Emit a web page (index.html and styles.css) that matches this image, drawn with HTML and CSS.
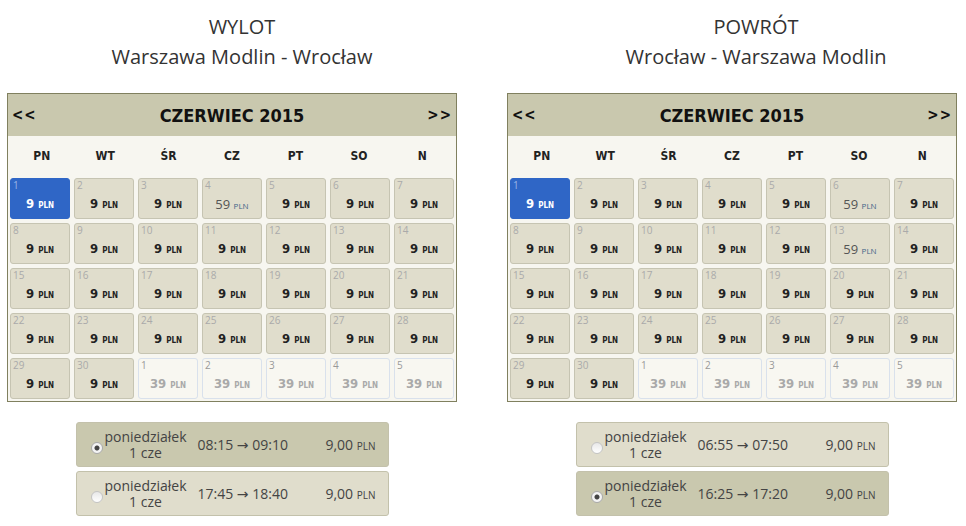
FILE: index.html
```html
<!DOCTYPE html>
<html lang="pl">
  <head>
    <meta charset="UTF-8" />
    <title>Rezerwacja lotu</title>
    <link rel="stylesheet" href="styles.css">
  </head>
  <body>
    <div class="trips">
      <!-- wylot -->
      <div class="trip">
        <div class="title title-out">WYLOT<br />Warszawa Modlin - Wrocław</div>
        <div class="cal">
          <div class="cal-head">
            <a class="nav">&lt;&lt;</a>
            <span class="month">CZERWIEC 2015</span>
            <a class="nav">&gt;&gt;</a>
          </div>
          <div class="week">
            <span>PN</span><span>WT</span><span>ŚR</span><span>CZ</span><span>PT</span><span>SO</span><span>N</span>
          </div>
          <div class="days">
            <div class="day sel"><span class="num">1</span><b class="price">9 <small>PLN</small></b></div>
            <div class="day"><span class="num">2</span><b class="price">9 <small>PLN</small></b></div>
            <div class="day"><span class="num">3</span><b class="price">9 <small>PLN</small></b></div>
            <div class="day"><span class="num">4</span><span class="price dear">59 <small>PLN</small></span></div>
            <div class="day"><span class="num">5</span><b class="price">9 <small>PLN</small></b></div>
            <div class="day"><span class="num">6</span><b class="price">9 <small>PLN</small></b></div>
            <div class="day"><span class="num">7</span><b class="price">9 <small>PLN</small></b></div>
            <div class="day"><span class="num">8</span><b class="price">9 <small>PLN</small></b></div>
            <div class="day"><span class="num">9</span><b class="price">9 <small>PLN</small></b></div>
            <div class="day"><span class="num">10</span><b class="price">9 <small>PLN</small></b></div>
            <div class="day"><span class="num">11</span><b class="price">9 <small>PLN</small></b></div>
            <div class="day"><span class="num">12</span><b class="price">9 <small>PLN</small></b></div>
            <div class="day"><span class="num">13</span><b class="price">9 <small>PLN</small></b></div>
            <div class="day"><span class="num">14</span><b class="price">9 <small>PLN</small></b></div>
            <div class="day"><span class="num">15</span><b class="price">9 <small>PLN</small></b></div>
            <div class="day"><span class="num">16</span><b class="price">9 <small>PLN</small></b></div>
            <div class="day"><span class="num">17</span><b class="price">9 <small>PLN</small></b></div>
            <div class="day"><span class="num">18</span><b class="price">9 <small>PLN</small></b></div>
            <div class="day"><span class="num">19</span><b class="price">9 <small>PLN</small></b></div>
            <div class="day"><span class="num">20</span><b class="price">9 <small>PLN</small></b></div>
            <div class="day"><span class="num">21</span><b class="price">9 <small>PLN</small></b></div>
            <div class="day"><span class="num">22</span><b class="price">9 <small>PLN</small></b></div>
            <div class="day"><span class="num">23</span><b class="price">9 <small>PLN</small></b></div>
            <div class="day"><span class="num">24</span><b class="price">9 <small>PLN</small></b></div>
            <div class="day"><span class="num">25</span><b class="price">9 <small>PLN</small></b></div>
            <div class="day"><span class="num">26</span><b class="price">9 <small>PLN</small></b></div>
            <div class="day"><span class="num">27</span><b class="price">9 <small>PLN</small></b></div>
            <div class="day"><span class="num">28</span><b class="price">9 <small>PLN</small></b></div>
            <div class="day"><span class="num">29</span><b class="price">9 <small>PLN</small></b></div>
            <div class="day"><span class="num">30</span><b class="price">9 <small>PLN</small></b></div>
            <div class="day other"><span class="num">1</span><b class="price">39 <small>PLN</small></b></div>
            <div class="day other"><span class="num">2</span><b class="price">39 <small>PLN</small></b></div>
            <div class="day other"><span class="num">3</span><b class="price">39 <small>PLN</small></b></div>
            <div class="day other"><span class="num">4</span><b class="price">39 <small>PLN</small></b></div>
            <div class="day other"><span class="num">5</span><b class="price">39 <small>PLN</small></b></div>
          </div>
        </div>
        <div class="flights">
          <label class="flight checked">
            <span class="radio"></span>
            <span class="when">poniedziałek<br />1 cze</span>
            <span class="hours">08:15 → 09:10</span>
            <span class="cost">9,00 <small>PLN</small></span>
          </label>
          <label class="flight">
            <span class="radio"></span>
            <span class="when">poniedziałek<br />1 cze</span>
            <span class="hours">17:45 → 18:40</span>
            <span class="cost">9,00 <small>PLN</small></span>
          </label>
        </div>
      </div>

      <!-- powrot -->
      <div class="trip">
        <div class="title title-back">POWRÓT<br />Wrocław - Warszawa Modlin</div>
        <div class="cal">
          <div class="cal-head">
            <a class="nav">&lt;&lt;</a>
            <span class="month">CZERWIEC 2015</span>
            <a class="nav">&gt;&gt;</a>
          </div>
          <div class="week">
            <span>PN</span><span>WT</span><span>ŚR</span><span>CZ</span><span>PT</span><span>SO</span><span>N</span>
          </div>
          <div class="days">
            <div class="day sel"><span class="num">1</span><b class="price">9 <small>PLN</small></b></div>
            <div class="day"><span class="num">2</span><b class="price">9 <small>PLN</small></b></div>
            <div class="day"><span class="num">3</span><b class="price">9 <small>PLN</small></b></div>
            <div class="day"><span class="num">4</span><b class="price">9 <small>PLN</small></b></div>
            <div class="day"><span class="num">5</span><b class="price">9 <small>PLN</small></b></div>
            <div class="day"><span class="num">6</span><span class="price dear">59 <small>PLN</small></span></div>
            <div class="day"><span class="num">7</span><b class="price">9 <small>PLN</small></b></div>
            <div class="day"><span class="num">8</span><b class="price">9 <small>PLN</small></b></div>
            <div class="day"><span class="num">9</span><b class="price">9 <small>PLN</small></b></div>
            <div class="day"><span class="num">10</span><b class="price">9 <small>PLN</small></b></div>
            <div class="day"><span class="num">11</span><b class="price">9 <small>PLN</small></b></div>
            <div class="day"><span class="num">12</span><b class="price">9 <small>PLN</small></b></div>
            <div class="day"><span class="num">13</span><span class="price dear">59 <small>PLN</small></span></div>
            <div class="day"><span class="num">14</span><b class="price">9 <small>PLN</small></b></div>
            <div class="day"><span class="num">15</span><b class="price">9 <small>PLN</small></b></div>
            <div class="day"><span class="num">16</span><b class="price">9 <small>PLN</small></b></div>
            <div class="day"><span class="num">17</span><b class="price">9 <small>PLN</small></b></div>
            <div class="day"><span class="num">18</span><b class="price">9 <small>PLN</small></b></div>
            <div class="day"><span class="num">19</span><b class="price">9 <small>PLN</small></b></div>
            <div class="day"><span class="num">20</span><b class="price">9 <small>PLN</small></b></div>
            <div class="day"><span class="num">21</span><b class="price">9 <small>PLN</small></b></div>
            <div class="day"><span class="num">22</span><b class="price">9 <small>PLN</small></b></div>
            <div class="day"><span class="num">23</span><b class="price">9 <small>PLN</small></b></div>
            <div class="day"><span class="num">24</span><b class="price">9 <small>PLN</small></b></div>
            <div class="day"><span class="num">25</span><b class="price">9 <small>PLN</small></b></div>
            <div class="day"><span class="num">26</span><b class="price">9 <small>PLN</small></b></div>
            <div class="day"><span class="num">27</span><b class="price">9 <small>PLN</small></b></div>
            <div class="day"><span class="num">28</span><b class="price">9 <small>PLN</small></b></div>
            <div class="day"><span class="num">29</span><b class="price">9 <small>PLN</small></b></div>
            <div class="day"><span class="num">30</span><b class="price">9 <small>PLN</small></b></div>
            <div class="day other"><span class="num">1</span><b class="price">39 <small>PLN</small></b></div>
            <div class="day other"><span class="num">2</span><b class="price">39 <small>PLN</small></b></div>
            <div class="day other"><span class="num">3</span><b class="price">39 <small>PLN</small></b></div>
            <div class="day other"><span class="num">4</span><b class="price">39 <small>PLN</small></b></div>
            <div class="day other"><span class="num">5</span><b class="price">39 <small>PLN</small></b></div>
          </div>
        </div>
        <div class="flights">
          <label class="flight">
            <span class="radio"></span>
            <span class="when">poniedziałek<br />1 cze</span>
            <span class="hours">06:55 → 07:50</span>
            <span class="cost">9,00 <small>PLN</small></span>
          </label>
          <label class="flight checked">
            <span class="radio"></span>
            <span class="when">poniedziałek<br />1 cze</span>
            <span class="hours">16:25 → 17:20</span>
            <span class="cost">9,00 <small>PLN</small></span>
          </label>
        </div>
      </div>
    </div>
  </body>
</html>
```
FILE: styles.css
```css
body {
  margin: 0;
  background: #fff;
  font-family: "Open Sans", "DejaVu Sans", sans-serif;
  color: #333;
}

.trips {
  display: flex;
  gap: 50px;
  padding: 12px 0 0 7px;
}

.trip {
  width: 450px;
}

.title {
  font-size: 20px;
  line-height: 30px;
  text-align: center;
  color: #333;
  margin-bottom: 21px;
}
.title-out {
  padding-left: 20px;
}
.title-back {
  padding-left: 48px;
}

/* kalendarz */
.cal {
  border: 1px solid #80805f;
  background: #f7f6f0;
  font-family: "DejaVu Sans Condensed", "DejaVu Sans", Tahoma, sans-serif;
}

.cal-head {
  display: flex;
  align-items: center;
  justify-content: space-between;
  height: 42px;
  padding: 0 4px;
  background: #c9c8ae;
  color: #111;
}
.nav {
  font-size: 15px;
  font-weight: bold;
  letter-spacing: 1px;
  cursor: pointer;
}
.month {
  font-size: 18px;
  font-weight: bold;
}

.week {
  display: grid;
  grid-template-columns: repeat(7, 1fr);
  height: 40px;
  align-items: center;
  text-align: center;
  font-size: 12px;
  font-weight: bold;
  color: #222;
  padding: 0 2px;
}

.days {
  display: grid;
  grid-template-columns: repeat(7, 60px);
  grid-auto-rows: 41px;
  gap: 4px;
  padding: 2px;
}

.day {
  display: flex;
  flex-direction: column;
  border: 1px solid #c6c4b2;
  border-radius: 3px;
  background: #e0ddcc;
  cursor: pointer;
}
.num {
  font-family: "Open Sans", sans-serif;
  font-size: 10px;
  line-height: 13px;
  padding-left: 2px;
  color: #aaa;
}
.price {
  text-align: center;
  font-size: 13px;
  line-height: 24px;
  color: #222;
}
.price small {
  font-size: 8px;
}
.price.dear {
  font-family: "Open Sans", sans-serif;
  font-size: 13px;
  color: #555;
}
.price.dear small {
  font-size: 8px;
  color: #468;
}

.day.sel {
  background: #2f66c6;
  border-color: #2f66c6;
}
.day.sel .num {
  color: #9bb5e6;
}
.day.sel .price {
  color: #fff;
}

.day.other {
  background: #f8f7f1;
  border-color: #d9e1ec;
}
.day.other .num {
  color: #999;
}
.day.other .price {
  color: #a9a9a9;
}

/* lista lotow */
.flights {
  display: flex;
  flex-direction: column;
  gap: 4px;
  width: 313px;
  margin: 20px auto 0;
}

.flight {
  display: flex;
  align-items: center;
  height: 43px;
  border: 1px solid #c3c1ab;
  border-radius: 3px;
  background: #e0ddcc;
  font-size: 14px;
  color: #444;
  cursor: pointer;
}
.flight.checked {
  background: #c9c8ae;
}

.radio {
  width: 10px;
  height: 10px;
  margin: 6px 0 0 14px;
  border: 1px solid #c4c4c4;
  border-radius: 50%;
  background: linear-gradient(#e8e8e8, #fff);
}
.flight.checked .radio {
  background: radial-gradient(circle, #444 0 2px, #f4f4f4 3px);
  border-color: #aaa;
}

.when {
  width: 86px;
  line-height: 16px;
  text-align: center;
}
.hours {
  margin-left: 9px;
}
.cost {
  margin-left: auto;
  padding-right: 12px;
}
.cost small {
  font-size: 10px;
}
```
